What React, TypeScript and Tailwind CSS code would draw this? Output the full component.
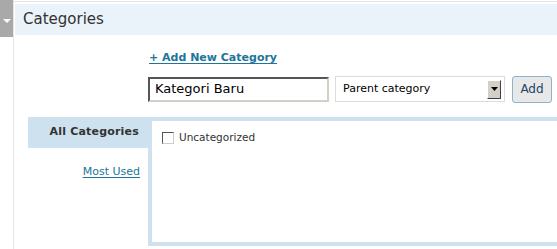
const font = { fontFamily: '"DejaVu Sans", Verdana, sans-serif' };

export default function App() {
  return (
    <div className="w-[557px] h-[249px] bg-white overflow-hidden flex text-[#333]" style={font}>
      {/* toggle strip */}
      <div className="w-[14px] shrink-0 border-r border-[#e5e5e5]">
        <div className="w-[13px] h-[37px] bg-[#a9a9a9] flex justify-center pt-[19px]">
          <svg width="8" height="4" viewBox="0 0 8 4">
            <path d="M0 0h8L4 4z" fill="#fff" />
          </svg>
        </div>
      </div>

      <div className="flex-1 min-w-0 flex flex-col">
        <div className="mt-[1px] border-t border-[#e3e3e3] pt-[2px]">
          <div className="ml-[1px] h-[31px] bg-[#eaf2fa] flex items-center pl-[8px]">
            <h3 className="text-[15px] leading-none text-[#333]">Categories</h3>
          </div>
        </div>

        <div className="pl-[135px] pt-[16px] text-[11px] leading-[13px]">
          <a className="font-bold text-[#21759b] underline underline-offset-[2px]">
            + Add New Category
          </a>
        </div>

        <div className="flex items-center pl-[134px] mt-[11px] h-[28px]">
          <div className="w-[181px] h-[25px] border-2 border-t-[#555] border-l-[#555] border-b-[#d4d0c8] border-r-[#d4d0c8] bg-white flex items-center pl-[5px] text-[13px] text-black">
            Kategori Baru
          </div>
          <div className="ml-[6px] w-[170px] h-[26px] border border-[#dcdcdc] bg-white flex items-center pl-[7px] pr-[3px] text-[11px] text-black">
            <span className="flex-1">Parent category</span>
            <div className="w-[14px] h-[19px] bg-[#d4d0c8] border border-t-[#fff] border-l-[#fff] border-b-[#404040] border-r-[#404040] flex items-center justify-center">
              <svg width="7" height="4" viewBox="0 0 7 4">
                <path d="M0 0h7L3.5 4z" fill="#000" />
              </svg>
            </div>
          </div>
          <button className="ml-[7px] w-[40px] h-[27px] bg-[#e8e8e8] border border-[#8cb4d0] rounded-[3px] text-[12px] text-[#246]">
            Add
          </button>
        </div>

        <div className="flex mt-[14px] h-[129px]">
          <div className="pl-[14px] w-[134px] shrink-0 flex flex-col">
            <div className="h-[31px] bg-[#cee1ef] flex items-center justify-end pr-[9px] text-[11px] font-bold text-[#333] tracking-[0.2px]">
              All Categories
            </div>
            <div className="mt-[17px] flex justify-end pr-[8px] text-[11px] leading-[13px]">
              <a className="text-[#21759b] underline underline-offset-[2px]">Most Used</a>
            </div>
          </div>
          <div className="w-[420px] shrink-0 border-4 border-[#cee1ef] bg-white pl-[10px] pt-[10px]">
            <label className="flex items-center gap-[5px] text-[10.5px] leading-[13px] text-[#333]">
              <span className="w-[12px] h-[12px] border border-t-[#555] border-l-[#555] border-b-[#ccc] border-r-[#ccc] bg-white" />
              Uncategorized
            </label>
          </div>
        </div>
      </div>
    </div>
  );
}
